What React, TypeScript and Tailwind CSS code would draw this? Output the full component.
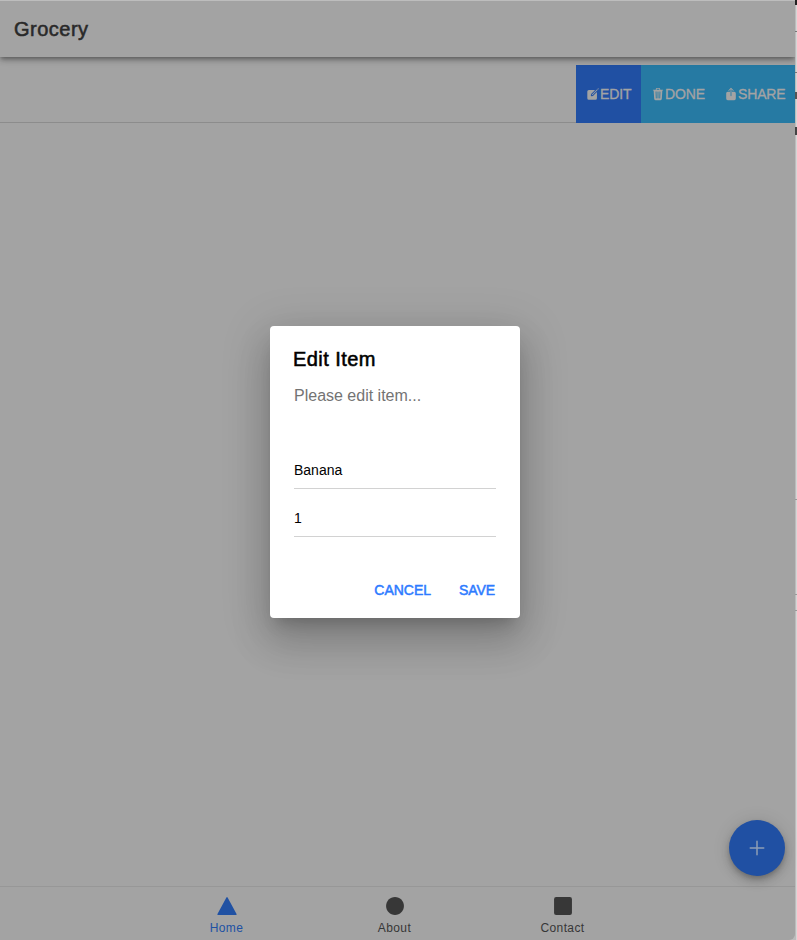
import React from 'react';
import { IoAdd, IoCreate, IoEllipse, IoShare, IoSquare, IoTrash, IoTriangle } from 'react-icons/io5';

function Option({ icon, label, className }: { icon: React.ReactNode; label: string; className: string }) {
  return (
    <button className={`flex h-full items-center text-sm text-[#a3a3a3] ${className}`}>
      {icon}
      <span className="tracking-[-0.15px] [-webkit-text-stroke:0.35px]">{label}</span>
    </button>
  );
}

function Tab({ icon, label, active }: { icon: React.ReactNode; label: string; active?: boolean }) {
  return (
    <button className={`flex w-[168px] flex-col items-center pt-2 ${active ? 'text-[#2051a3]' : 'text-[#373737]'}`}>
      {icon}
      <span className="mt-1 mr-px text-xs leading-[14px] tracking-[0.4px]">{label}</span>
    </button>
  );
}

function Field({ value }: { value: string }) {
  return (
    <input
      readOnly
      value={value}
      className="h-[38px] w-full border-b border-[#d2d2d2] bg-transparent pt-px text-sm text-black outline-none"
    />
  );
}

export default function App() {
  return (
    <div className="relative flex h-[940px] w-[797px] overflow-hidden bg-[#bcbcbc] font-['Liberation_Sans',Arial,sans-serif]">
      <div className="flex w-[795px] flex-col overflow-hidden rounded-br-md bg-[#a3a3a3]">
        <header className="z-10 flex h-[57px] shrink-0 items-center border-t border-[#bdbdbd] bg-[#a3a3a3] pl-[14px] shadow-[0_2px_4px_-1px_rgba(0,0,0,0.3),0_4px_5px_0_rgba(0,0,0,0.16),0_1px_10px_0_rgba(0,0,0,0.12)]">
          <h1 className="text-xl tracking-[0.5px] text-[#292929] [-webkit-text-stroke:0.55px]">Grocery</h1>
        </header>
        <main className="flex flex-1 flex-col pt-2">
          <div className="flex h-[58px] justify-end border-b border-[#8c8c8c]">
            <div className="flex h-[58px]">
              <Option className="w-[65px] bg-[#2050a3] pl-[10px]" label="EDIT" icon={<IoCreate size={14} />} />
              <Option className="w-[73px] bg-[#267aa3] pl-[10px]" label="DONE" icon={<IoTrash size={14} />} />
              <Option className="w-[81px] bg-[#267aa3] pl-[10px]" label="SHARE" icon={<IoShare size={14} />} />
            </div>
          </div>
        </main>
        <nav className="flex h-[54px] shrink-0 justify-center border-t border-[#979797] pr-[5px]">
          <Tab active label="Home" icon={<IoTriangle size={22} />} />
          <Tab label="About" icon={<IoEllipse size={22} />} />
          <Tab label="Contact" icon={<IoSquare size={22} />} />
        </nav>
      </div>
      <button className="absolute top-[820px] left-[729px] flex size-14 items-center justify-center rounded-full bg-[#2050a3] text-[#8d9db5] shadow-[0_3px_5px_-1px_rgba(0,0,0,0.2),0_6px_10px_0_rgba(0,0,0,0.14),0_1px_18px_0_rgba(0,0,0,0.12)]">
        <IoAdd size={24} />
      </button>
      <section className="absolute top-[326px] left-[270px] flex h-[292px] w-[250px] flex-col rounded bg-white px-6 shadow-[0_11px_15px_-7px_rgba(0,0,0,0.2),0_24px_38px_3px_rgba(0,0,0,0.14),0_9px_46px_8px_rgba(0,0,0,0.12)]">
        <h2 className="-ml-px pt-[19px] text-xl leading-7 tracking-[0.45px] text-black [-webkit-text-stroke:0.55px]">Edit Item</h2>
        <p className="mt-[11px] text-base leading-6 text-[#737373]">Please edit item...</p>
        <div className="mt-[43px] flex flex-col gap-[10px]">
          <Field value="Banana" />
          <Field value="1" />
        </div>
        <div className="mt-[43px] flex justify-end gap-7 pr-px text-sm text-[#2d7bff] [-webkit-text-stroke:0.5px]">
          <button>CANCEL</button>
          <button className="tracking-[-0.1px]">SAVE</button>
        </div>
      </section>
      <aside className="flex w-[2px] flex-col border-r border-[#d6d6d6]">
        <i className="-mr-px h-[5px] bg-[#222]" />
        <i className="-mr-px mt-[26px] h-px bg-[#777]" />
        <i className="-mr-px mt-[40px] h-px bg-[#777]" />
        <i className="-mr-px mt-[19px] h-[7px] bg-[#555]" />
        <i className="-mr-px mt-[28px] h-[8px] bg-[#444]" />
        <i className="-mr-px mt-[364px] h-px bg-[#999]" />
        <i className="-mr-px mt-[94px] h-px bg-[#999]" />
        <i className="-mr-px mt-[15px] h-px bg-[#999]" />
      </aside>
    </div>
  );
}
